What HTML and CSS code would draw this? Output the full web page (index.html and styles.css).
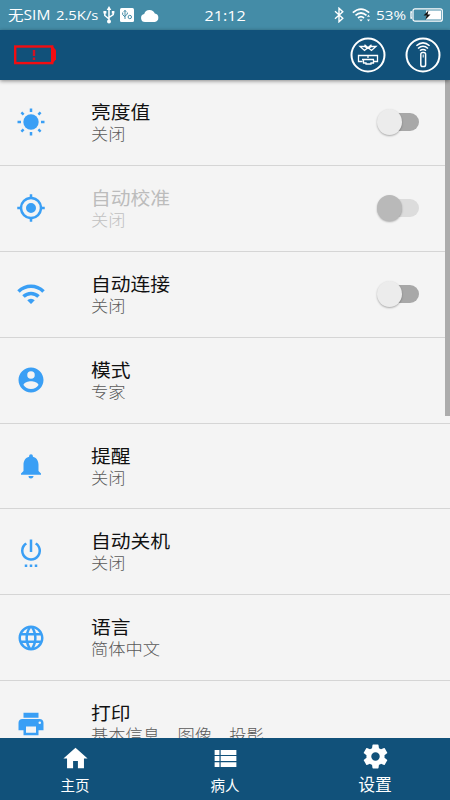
FILE: index.html
```html
<!DOCTYPE html>
<html lang="zh-CN">
<head>
<meta charset="utf-8">
<title>设置</title>
<link rel="stylesheet" href="styles.css">
</head>
<body>
<div class="app">
  <header class="status">
    <div class="status-side">
      <span class="status-text sim">无SIM</span>
      <span class="status-text speed">2.5K/s</span>
      <svg class="usb" width="12" height="18" viewBox="0 0 12 18" fill="none" stroke="#fff" stroke-width="1.5"><path d="M6 3v12M1.800 6v3.500L6 13M10.200 6v2.500L6 11.500"/><path d="M6 0l2.300 4H3.700zM.4 5h3v2.600h-3zM8.800 5h2.600v2.400H8.800z" fill="#fff" stroke="none"/><circle cx="6" cy="15.500" r="2" fill="#fff" stroke="none"/></svg>
      <svg class="debug" width="14" height="14" viewBox="0 0 14 14"><rect width="14" height="14" rx="1.500" fill="#fff"/><path d="M5 3v8M2.700 4.500v2.200L5 9M7.300 4.500v1.700L5 8M3.800 3.800L5 2.200l1.200 1.600" fill="none" stroke="#448ca7"/><circle cx="9.800" cy="9" r="1.700" fill="none" stroke="#448ca7"/></svg>
      <svg class="cloud" width="18" height="13" viewBox="0 0 18 13" fill="#fff"><path d="M4 13a4 4 0 0 1-.8-7.900A5.600 5.600 0 0 1 13.800 4.600 4.250 4.250 0 0 1 13.700 13z"/></svg>
    </div>
    <time class="status-text clock">21:12</time>
    <div class="status-side end">
      <svg class="bt" width="10" height="16" viewBox="0 0 10 16" fill="none" stroke="#fff" stroke-width="1.400"><path d="M1 4.300l7.800 7L5 14.800V1.200l3.800 3.500L1 11.700"/></svg>
      <svg class="wifi" width="20" height="14" viewBox="0 0 20 14" fill="none" stroke="#fff" stroke-width="1.700"><path d="M.8 4.700Q9 -2.500 17.200 4.700M3.500 7.400Q9 2.600 14.500 7.400M6 10Q9 7.400 12 10"/><path d="M7.200 11.500h3.600L9 13.500zM15 8.700l1.500-2 1.500 2zM15 11.500l1.500 2 1.500-2z" fill="#fff" stroke="none"/></svg>
      <span class="status-text percent">53%</span>
      <svg class="charge" width="33" height="14" viewBox="0 0 33 14"><rect x="3" y=".8" width="29.300" height="12.400" rx="2" fill="none" stroke="#fff" stroke-width="1.200"/><path d="M16 2.500h15v9H16z" fill="#fff"/><path d="M2 4H1v6h1" fill="none" stroke="#fff" stroke-width="1.300"/><path d="M18.500 2.500l-5 5h3l-1 4 5-5h-3z" fill="#111"/></svg>
    </div>
  </header>
  <div class="toolbar">
    <svg class="alert" width="43" height="20" viewBox="0 0 43 20"><rect x="1.200" y="1.500" width="37" height="16.600" fill="none" stroke="#f20d12" stroke-width="2.400"/><path d="M38 .3l4 5v9l-4 5z" fill="#f20d12"/><path d="M20 5v6M20 12.500V15" stroke="#d01225" stroke-width="2.400"/></svg>
    <div class="tools">
      <svg width="36" height="36" viewBox="0 0 36 36" fill="none" stroke="#fff" stroke-width="1.300"><circle cx="18" cy="18" r="16.500" stroke-width="2"/><path d="M14.500 7.800l7 5.700 4.500-4h-4.500l-3.500 2-3.500-2H10l4.500 4 7-5.700"/><path d="M12.500 24.500H8.500v-6h19v6h-4M12 22.500h12M13.500 22.500v3.500h2.500v1h5v-1h2.500v-3.500M18 18.500v2.500"/></svg>
      <svg width="36" height="36" viewBox="0 0 36 36" fill="none" stroke="#fff" stroke-width="1.500"><circle cx="18" cy="18" r="16.500" stroke-width="2"/><path d="M11.400 8.800Q18 3 24.600 8.800M13 11.500Q18 7 23 11.500M15 13.700Q18 11.300 21 13.700"/><rect x="15.800" y="15.500" width="4.800" height="14" rx="1.800"/><path d="M18.200 17.500v3" stroke-width="1"/></svg>
    </div>
  </div>
  <main class="list">
    <section class="row">
      <svg class="icon" viewBox="0 0 30 30"><circle cx="15" cy="15" r="7.700"/><path class="line" d="M15 1.500v3.500M15 25v3.500M1.500 15H5M25 15h3.500M5.400 5.400l2.200 2.200M22.400 22.400l2.200 2.200M24.600 5.400l-2.200 2.200M7.600 22.400l-2.200 2.200"/></svg>
      <div class="copy"><h2>亮度值</h2><p>关闭</p></div><i class="switch"></i>
    </section>
    <section class="row disabled">
      <svg class="icon" viewBox="0 0 24 24"><path d="M12 8a4 4 0 1 0 0 8 4 4 0 0 0 0-8zm8.940 3A8.994 8.994 0 0 0 13 3.060V1h-2v2.060A8.994 8.994 0 0 0 3.060 11H1v2h2.060A8.994 8.994 0 0 0 11 20.940V23h2v-2.060A8.994 8.994 0 0 0 20.940 13H23v-2zM12 19a7 7 0 1 1 0-14 7 7 0 0 1 0 14z"/></svg>
      <div class="copy"><h2>自动校准</h2><p>关闭</p></div><i class="switch"></i>
    </section>
    <section class="row">
      <svg class="icon" viewBox="0 0 24 24"><path d="M1 9l2 2c4.970-4.970 13.030-4.970 18 0l2-2C16.930 2.930 7.080 2.930 1 9zm8 8l3 3 3-3a4.237 4.237 0 0 0-6 0zm-4-4l2 2a7.074 7.074 0 0 1 10 0l2-2C15.140 9.140 8.870 9.140 5 13z"/></svg>
      <div class="copy"><h2>自动连接</h2><p>关闭</p></div><i class="switch"></i>
    </section>
    <section class="row">
      <svg class="icon" viewBox="0 0 24 24"><path d="M12 2C6.480 2 2 6.480 2 12s4.480 10 10 10 10-4.480 10-10S17.520 2 12 2zm0 3a3 3 0 1 1 0 6 3 3 0 0 1 0-6zm0 14.200A7.200 7.200 0 0 1 6 15.980c.03-1.990 4-3.080 6-3.080 1.990 0 5.970 1.090 6 3.080a7.200 7.200 0 0 1-6 3.220z"/></svg>
      <div class="copy"><h2>模式</h2><p>专家</p></div>
    </section>
    <section class="row">
      <svg class="icon" viewBox="0 0 24 24"><path d="M12 22c1.100 0 2-.9 2-2h-4a2 2 0 0 0 2 2zm6-6v-5c0-3.070-1.640-5.640-4.500-6.320V4a1.500 1.500 0 0 0-3 0v.68C7.630 5.360 6 7.920 6 11v5l-2 2v1h16v-1z"/></svg>
      <div class="copy"><h2>提醒</h2><p>关闭</p></div>
    </section>
    <section class="row">
      <svg class="icon" viewBox="0 0 24 24"><path d="M7 24h2v-2H7zm4 0h2v-2h-2zm2-22h-2v10h2zm3.560 2.440l-1.450 1.450A5.969 5.969 0 0 1 18 11a6 6 0 1 1-9.120-5.120L7.440 4.440A7.961 7.961 0 0 0 4 11a8 8 0 1 0 12.560-6.560zM15 24h2v-2h-2z"/></svg>
      <div class="copy"><h2>自动关机</h2><p>关闭</p></div>
    </section>
    <section class="row">
      <svg class="icon" viewBox="0 0 24 24"><path d="M11.990 2C6.470 2 2 6.480 2 12s4.470 10 9.990 10C17.520 22 22 17.520 22 12S17.520 2 11.990 2zm6.930 6h-2.950a15.650 15.650 0 0 0-1.380-3.560A8.030 8.030 0 0 1 18.920 8zM12 4.040c.83 1.200 1.480 2.530 1.910 3.960h-3.820c.43-1.430 1.080-2.760 1.910-3.960zM4.260 14C4.100 13.360 4 12.690 4 12s.1-1.360.26-2h3.380a16.500 16.500 0 0 0 0 4zm.82 2h2.950c.32 1.250.78 2.450 1.380 3.560A7.987 7.987 0 0 1 5.080 16zm2.950-8H5.080a7.987 7.987 0 0 1 4.330-3.560A15.650 15.650 0 0 0 8.030 8zM12 19.960c-.83-1.200-1.480-2.530-1.910-3.960h3.820c-.43 1.430-1.080 2.760-1.910 3.960zM14.340 14H9.660a14.700 14.700 0 0 1 0-4h4.680a14.700 14.700 0 0 1 0 4zm.25 5.560c.6-1.110 1.060-2.310 1.380-3.560h2.950a8.030 8.030 0 0 1-4.330 3.560zM16.360 14a16.500 16.500 0 0 0 0-4h3.380c.16.640.26 1.310.26 2s-.1 1.360-.26 2z"/></svg>
      <div class="copy"><h2>语言</h2><p>简体中文</p></div>
    </section>
    <section class="row">
      <svg class="icon" viewBox="0 0 24 24"><path d="M19 8H5c-1.660 0-3 1.340-3 3v6h4v4h12v-4h4v-6c0-1.660-1.340-3-3-3zm-3 11H8v-5h8zm3-7a1 1 0 1 1 0-2 1 1 0 0 1 0 2zm-1-9H6v4h12z"/></svg>
      <div class="copy"><h2>打印</h2><p>基本信息、图像、投影</p></div>
    </section>
    <i class="scrollbar"></i>
  </main>
  <nav class="tabs">
    <a class="tab"><svg viewBox="0 0 24 24"><path d="M10 20v-6h4v6h5v-8h3L12 3 2 12h3v8z"/></svg><span>主页</span></a>
    <a class="tab"><svg viewBox="0 0 24 24"><path d="M3 14h4v-4H3zm0 5h4v-4H3zM3 9h4V5H3zm5 5h13v-4H8zm0 5h13v-4H8zM8 5v4h13V5z"/></svg><span>病人</span></a>
    <a class="tab active"><svg viewBox="0 0 24 24"><path d="M19.430 12.980c.04-.32.07-.64.07-.98s-.03-.66-.07-.98l2.110-1.650a.5.5 0 0 0 .12-.64l-2-3.460a.5.5 0 0 0-.61-.22l-2.490 1a7.300 7.300 0 0 0-1.690-.98l-.38-2.650A.488.488 0 0 0 14 2h-4a.488.488 0 0 0-.49.420l-.38 2.650c-.61.250-1.170.590-1.690.980l-2.490-1a.488.488 0 0 0-.61.220l-2 3.460a.493.493 0 0 0 .12.640l2.110 1.650c-.04.320-.07.650-.07.980s.03.660.07.980l-2.110 1.650a.5.5 0 0 0-.12.640l2 3.460c.12.220.39.300.61.220l2.490-1c.52.400 1.080.730 1.690.980l.38 2.650c.03.240.240.420.490.420h4c.25 0 .46-.18.490-.42l.38-2.650a7.680 7.680 0 0 0 1.690-.98l2.490 1c.23.090.49 0 .61-.22l2-3.460a.5.500 0 0 0-.12-.64zM12 15.500a3.500 3.500 0 1 1 0-7 3.500 3.500 0 0 1 0 7z"/></svg><span>设置</span></a>
  </nav>
</div>
</body>
</html>
```
FILE: styles.css
```css
* { box-sizing: border-box; }
body { margin: 0; font-family: "Noto Sans CJK SC", sans-serif; }
svg { display: block; flex: none; }
.app { width: 450px; height: 800px; display: flex; flex-direction: column; overflow: hidden; background: #f4f4f4; }
.status { height: 30px; flex: none; display: grid; grid-template-columns: 1fr auto 1fr; align-items: center; padding: 0 7px 0 8px; background: #448ca7; color: #fff; }
.status-side { display: flex; align-items: center; }
.end { justify-content: flex-end; }
.status-text { font: 400 14px/30px "Open Sans", "Noto Sans CJK SC", sans-serif; white-space: nowrap; transform: scaleX(1.11); transform-origin: left center; }
.clock { font-size: 15px; transform: scaleX(1.08); transform-origin: center; }
.sim { width: 48px; }
.speed { width: 47px; font-size: 13px; transform: scaleX(1.14); }
.debug { margin-left: 5px; }
.cloud { margin-left: 7px; }
.wifi { margin: 0 4px 0 8px; }
.percent { width: 34px; font-size: 13.500px; transform: scaleX(1.13); }
.toolbar { position: relative; z-index: 1; height: 50px; flex: none; display: flex; align-items: center; justify-content: space-between; padding: 0 9.500px 0 14px; background: #11517a; box-shadow: 0 1px 4px rgba(0, 0, 0, .45); }
.tools { display: flex; gap: 19px; }
.list { position: relative; flex: 1; min-height: 0; overflow: hidden; }
.row { height: 85.900px; display: flex; align-items: center; padding: 0 31.500px 0 15.500px; border-bottom: 1px solid #d5d5d5; }
.icon { width: 30px; height: 30px; fill: #3a9ff5; }
.line { fill: none; stroke: #3a9ff5; stroke-width: 2.500; }
.copy { flex: 1; margin-left: 45.500px; padding-bottom: 1px; white-space: nowrap; }
h2, p { margin: 0; font-weight: 400; transform-origin: left center; }
h2 { font-size: 19.800px; line-height: 23px; color: #111; transform: scaleY(.93); }
p { font-size: 17.300px; line-height: 21px; color: #595959; transform: scaleY(.93); font-weight: 300; }
.disabled h2 { color: #bcbcbc; }
.disabled p { color: #c0c0c0; }
.switch { position: relative; width: 42px; height: 26px; display: flex; align-items: center; justify-content: flex-end; }
.switch::before { content: ""; width: 35px; height: 18px; border-radius: 9px; background: #a8a8a8; }
.switch::after { content: ""; position: absolute; left: 0; top: 0; width: 25px; height: 26px; border-radius: 50%; background: #ececec; box-shadow: 0 1px 2px rgba(0, 0, 0, .3); }
.disabled .switch::before { background: #dcdcdc; }
.disabled .switch::after { background: #b9b9b9; }
.scrollbar { position: absolute; right: 0; top: 0; width: 5px; height: 336px; background: #acacac; }
.tabs { height: 62.500px; flex: none; display: grid; grid-template-columns: repeat(3, 1fr); background: #11517a; }
.tab { display: flex; flex-direction: column; align-items: center; padding-top: 6px; color: #fff; font-size: 14.500px; line-height: 20px; }
.tab svg { width: 29px; height: 29px; fill: #fff; }
.tab span { margin-top: 2px; }
.active { padding-top: 4px; font-size: 16.800px; }
.active span { margin-top: 3px; }
```
